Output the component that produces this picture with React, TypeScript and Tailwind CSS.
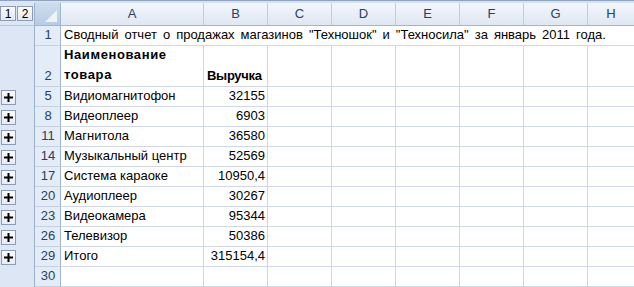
import React from "react";

const font = { fontFamily: '"Liberation Sans", Arial, sans-serif' };

const cols = ["B", "C", "D", "E", "F", "G"];

const data: [string, string, string][] = [
  ["5", "Видиомагнитофон", "32155"],
  ["8", "Видеоплеер", "6903"],
  ["11", "Магнитола", "36580"],
  ["14", "Музыкальный центр", "52569"],
  ["17", "Система караоке", "10950,4"],
  ["20", "Аудиоплеер", "30267"],
  ["23", "Видеокамера", "95344"],
  ["26", "Телевизор", "50386"],
  ["29", "Итого", "315154,4"],
];

function Plus() {
  return (
    <div className="ml-[1px] w-[15px] h-[15px] border border-[#8c9cb3] bg-gradient-to-b from-[#fbfcfe] to-[#e6ecf4] flex items-center justify-center">
      <svg width="9" height="9" viewBox="0 0 9 9">
        <rect x="3.5" y="0" width="2" height="9" fill="#000" />
        <rect x="0" y="3.5" width="9" height="2" fill="#000" />
      </svg>
    </div>
  );
}

function Gutter({ plus }: { plus?: boolean }) {
  return (
    <div className="w-[35px] shrink-0 bg-[#dce6f4] border-r border-[#9eb1ca] flex items-center">
      {plus ? <Plus /> : null}
    </div>
  );
}

function RowHead({ n }: { n: string }) {
  return (
    <div className="w-[26px] shrink-0 bg-[#e4ecf7] border-r border-[#9eb6ce] border-b border-b-[#c5d1e1] flex items-end justify-center pl-[1px] pb-[1px] text-[13px] text-[#27415f]">
      {n}
    </div>
  );
}

export default function App() {
  return (
    <div className="w-[634px] h-[287px] overflow-hidden bg-white flex flex-col" style={font}>
      {/* top strip */}
      <div className="h-[3px] flex shrink-0">
        <div className="w-[35px] bg-[#dce6f4] border-t border-[#8fa3bf]" />
        <div className="flex-1 bg-[#d7e1ee] border-t border-[#8fa3bf]" />
      </div>
      {/* header row */}
      <div className="h-[23px] flex shrink-0">
        <div className="w-[35px] shrink-0 bg-[#dce6f4] border-r border-[#9eb1ca] border-b border-b-[#b7c7dc] flex items-center gap-[1px] pb-[1px]">
          <div className="w-[16px] h-[15px] border border-[#8c9cb3] bg-gradient-to-b from-[#fbfcfe] to-[#e3e9f2] flex items-center justify-center text-[12px] text-black leading-none">1</div>
          <div className="w-[16px] h-[15px] border border-[#8c9cb3] bg-gradient-to-b from-[#fbfcfe] to-[#e3e9f2] flex items-center justify-center text-[12px] text-black leading-none">2</div>
        </div>
        <div className="w-[26px] shrink-0 bg-gradient-to-b from-[#cfdcee] to-[#b9cbe4] border-r border-[#9eb6ce] border-b border-b-[#9eb6ce] relative">
          <svg className="absolute right-[3px] bottom-[3px]" width="12" height="12" viewBox="0 0 12 12">
            <polygon points="12,0 12,12 0,12" fill="#eef3f9" />
          </svg>
        </div>
        <div className="w-[143px] shrink-0 bg-gradient-to-b from-[#f3f7fc] to-[#dfe7f2] border-r border-[#c0cddd] border-b border-b-[#9eb6ce] flex items-center justify-center text-[13px] text-[#27415f]">
          A
        </div>
        {cols.map((c) => (
          <div
            key={c}
            className="w-[64px] shrink-0 bg-gradient-to-b from-[#f3f7fc] to-[#dfe7f2] border-r border-[#c0cddd] border-b border-b-[#9eb6ce] flex items-center justify-center text-[13px] text-[#27415f]"
          >
            {c}
          </div>
        ))}
        <div className="flex-1 bg-gradient-to-b from-[#f3f7fc] to-[#dfe7f2] border-b border-[#9eb6ce] flex items-center justify-center text-[13px] text-[#27415f]">
          H
        </div>
      </div>
      {/* row 1 */}
      <div className="h-[20px] flex shrink-0">
        <Gutter />
        <RowHead n="1" />
        <div className="flex-1 border-b border-[#d0d7e5] flex items-end pl-[3px] pb-[1px] text-[13px] text-black whitespace-nowrap [word-spacing:2.4px]">
          Сводный отчет о продажах магазинов "Техношок" и "Техносила" за январь 2011 года.
        </div>
      </div>
      {/* row 2 */}
      <div className="h-[41px] flex shrink-0">
        <Gutter />
        <RowHead n="2" />
        <div className="w-[143px] shrink-0 border-r border-b border-[#d0d7e5] flex flex-col justify-end pl-[3px] pb-[1px] text-[13px] font-bold text-black leading-[20px] tracking-[0.6px]">
          <div>Наименование</div>
          <div>товара</div>
        </div>
        <div className="w-[64px] shrink-0 border-r border-b border-[#d0d7e5] flex items-end pl-[3px] pb-[1px] text-[13px] font-bold text-black tracking-[-0.3px]">
          Выручка
        </div>
        {cols.slice(1).map((c) => (
          <div key={c} className="w-[64px] shrink-0 border-r border-b border-[#d0d7e5]" />
        ))}
        <div className="flex-1 border-b border-[#d0d7e5]" />
      </div>
      {data.map(([n, name, val]) => (
        <div key={n} className="h-[20px] flex shrink-0">
          <Gutter plus />
          <RowHead n={n} />
          <div className="w-[143px] shrink-0 border-r border-b border-[#d0d7e5] flex items-end pl-[3px] pb-[1px] text-[13px] text-black whitespace-nowrap">
            {name}
          </div>
          <div className="w-[64px] shrink-0 border-r border-b border-[#d0d7e5] flex items-end justify-end pr-[2px] pb-[1px] text-[13px] text-black">
            {val}
          </div>
          {cols.slice(1).map((c) => (
            <div key={c} className="w-[64px] shrink-0 border-r border-b border-[#d0d7e5]" />
          ))}
          <div className="flex-1 border-b border-[#d0d7e5]" />
        </div>
      ))}
      {/* row 30 */}
      <div className="h-[20px] flex shrink-0">
        <Gutter />
        <RowHead n="30" />
        <div className="w-[143px] shrink-0 border-r border-b border-[#d0d7e5]" />
        {cols.map((c) => (
          <div key={c} className="w-[64px] shrink-0 border-r border-b border-[#d0d7e5]" />
        ))}
        <div className="flex-1 border-b border-[#d0d7e5]" />
      </div>
    </div>
  );
}
